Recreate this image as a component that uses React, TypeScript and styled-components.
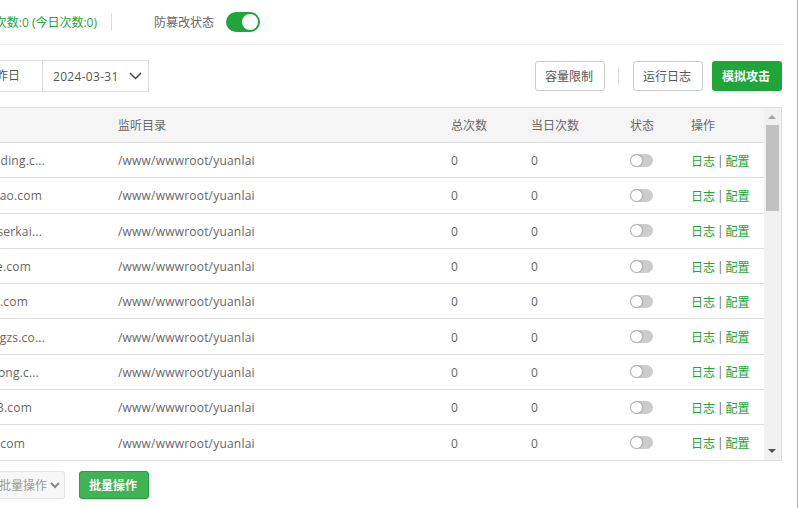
import * as React from "react";
import styled, { createGlobalStyle } from "styled-components";

const GlobalStyle = createGlobalStyle`
  html, body {
    margin: 0;
    padding: 0;
    background: #fff;
  }
  body {
    font-family: "Open Sans", "Noto Sans CJK SC", sans-serif;
    font-size: 12px;
    color: #666;
  }
`;

const Viewport = styled.div`
  width: 798px;
  height: 508px;
  overflow: hidden;
  background: #fff;
  box-sizing: border-box;
  border-right: 1px solid #b4b4b4;
`;

// the panel is cut off by the left edge of the window
const Panel = styled.div`
  width: 882px;
  margin-left: -100px;
  display: flex;
  flex-direction: column;
`;

const TopBar = styled.div`
  height: 44px;
  display: flex;
  align-items: center;
  border-bottom: 1px solid #eee;
  box-sizing: content-box;
`;

const Count = styled.span`
  color: #20a53a;
  width: 197px;
  text-align: right;
  white-space: nowrap;
`;

const VLine = styled.span<{ $h: number }>`
  width: 1px;
  height: ${(p) => p.$h}px;
  background: #ddd;
`;

const CountDivider = styled(VLine)`
  margin-left: 14px;
`;

const TopLabel = styled.span`
  margin-left: 42px;
  font-size: 12px;
  color: #666;
`;

const BigSwitch = styled.span`
  margin-left: 12px;
  width: 34px;
  height: 20px;
  border-radius: 10px;
  background: #20a53a;
  position: relative;
  &::after {
    content: "";
    position: absolute;
    right: 2px;
    top: 2px;
    width: 16px;
    height: 16px;
    border-radius: 50%;
    background: #fff;
  }
`;

const Toolbar = styled.div`
  display: flex;
  align-items: center;
  height: 32px;
  margin-top: 15px;
`;

const DateGroup = styled.div`
  display: flex;
  height: 32px;
  box-sizing: border-box;
  border: 1px solid #ddd;
  margin-left: 90px;
  width: 159px;
`;

const DateTab = styled.span`
  width: 52px;
  text-align: right;
  padding-right: 22px;
  box-sizing: border-box;
  line-height: 30px;
  white-space: nowrap;
  border-right: 1px solid #ddd;
  color: #555;
`;

const DateValue = styled.span`
  flex: 1;
  display: flex;
  align-items: center;
  padding-left: 10px;
  gap: 10px;
  color: #555;
  letter-spacing: 0.3px;
`;

const Spacer = styled.div`
  flex: 1;
`;

const OutlineButton = styled.button`
  width: 70px;
  height: 30px;
  padding: 0 2px 0 0;
  background: #fff;
  border: 1px solid #ccc;
  border-radius: 3px;
  font: inherit;
  color: #555;
`;

const PrimaryButton = styled.button`
  width: 70px;
  height: 30px;
  margin-left: 9px;
  padding: 0 2px 0 0;
  background: #20a53a;
  border: 0;
  border-radius: 3px;
  font: inherit;
  font-weight: 700;
  color: #fff;
`;

const Divider = styled(VLine)`
  margin: 0 14px 0 13px;
`;

const TableBox = styled.div`
  margin-top: 15px;
  height: 354px;
  box-sizing: border-box;
  border: 1px solid #ddd;
  display: flex;
`;

const TableBody = styled.div`
  flex: 1;
  min-width: 0;
  overflow: hidden;
`;

const cols = "217px 333px 80px 99px 61px 1fr";

const HeadRow = styled.div`
  display: grid;
  grid-template-columns: ${cols};
  height: 34px;
  align-items: center;
  background: #f5f5f5;
  border-bottom: 1px solid #ddd;
  box-sizing: content-box;
`;

const Row = styled.div`
  display: grid;
  grid-template-columns: ${cols};
  height: 33.3px;
  padding-top: 1px;
  align-items: center;
  border-bottom: 1px solid #ddd;
  box-sizing: content-box;
`;

const Site = styled.span<{ $end: number }>`
  text-align: right;
  padding-right: ${(p) => 117 - p.$end}px;
  white-space: nowrap;
  letter-spacing: 0.2px;
`;

const PathCell = styled.span`
  letter-spacing: 0.2px;
`;

const SwitchCell = styled.span`
  display: flex;
  margin-top: -1px;
`;

const SmallSwitch = styled.span`
  width: 23px;
  height: 13px;
  border-radius: 7px;
  background: #ccc;
  position: relative;
  &::after {
    content: "";
    position: absolute;
    left: 1px;
    top: 1px;
    width: 11px;
    height: 11px;
    border-radius: 50%;
    background: #fff;
    box-shadow: 0 0 2px rgba(0, 0, 0, 0.5);
  }
`;

const Ops = styled.span`
  display: flex;
  gap: 2px;
  color: #666;
  white-space: nowrap;
`;

const OpLink = styled.a`
  color: #20a53a;
`;

const ScrollTrack = styled.div`
  width: 17px;
  background: #f1f1f1;
  position: relative;
  flex: none;
`;

const ScrollThumb = styled.div`
  position: absolute;
  left: 2px;
  right: 2px;
  top: 17px;
  height: 86px;
  background: #c1c1c1;
`;

const Arrow = styled.span<{ $down?: boolean }>`
  position: absolute;
  left: 4px;
  width: 0;
  height: 0;
  border-left: 4px solid transparent;
  border-right: 4px solid transparent;
  ${(p) =>
    p.$down
      ? "bottom: 7px; border-top: 4px solid #505050;"
      : "top: 7px; border-bottom: 4px solid #a3a3a3;"}
`;

const Footer = styled.div`
  display: flex;
  align-items: center;
  margin-top: 10px;
`;

const BatchSelect = styled.div`
  margin-left: 90px;
  width: 75px;
  height: 28px;
  box-sizing: border-box;
  border: 1px solid #e5e5e5;
  border-radius: 3px;
  background: #f7f7f7;
  color: #999;
  display: flex;
  align-items: center;
  justify-content: flex-end;
  padding-right: 4px;
  gap: 3px;
`;

const BatchButton = styled.button`
  margin-left: 14px;
  width: 70px;
  height: 28px;
  padding: 0 2px 0 0;
  background: #3fb356;
  border: 1px solid #20a53a;
  border-radius: 3px;
  font: inherit;
  font-weight: 700;
  color: #fff;
`;

const sites = [
  { name: "ding.c...", end: 44 },
  { name: "ao.com", end: 41 },
  { name: "serkai...", end: 41 },
  { name: "e.com", end: 30 },
  { name: ".com", end: 27 },
  { name: "gzs.co...", end: 44 },
  { name: "ong.c...", end: 38 },
  { name: "3.com", end: 31 },
  { name: "com", end: 24 },
];

export default function App() {
  return (
    <Viewport>
      <GlobalStyle />
      <Panel>
        <TopBar>
          <Count>总次数:0 (今日次数:0)</Count>
          <CountDivider $h={18} />
          <TopLabel>防篡改状态</TopLabel>
          <BigSwitch />
        </TopBar>
        <Toolbar>
          <DateGroup>
            <DateTab>昨日</DateTab>
            <DateValue>
              2024-03-31
              <svg width="13" height="8" viewBox="0 0 13 8" fill="none" stroke="#444" strokeWidth="1.5">
                <path d="M1 1l5.5 5.5L12 1" />
              </svg>
            </DateValue>
          </DateGroup>
          <Spacer />
          <OutlineButton>容量限制</OutlineButton>
          <Divider $h={18} />
          <OutlineButton>运行日志</OutlineButton>
          <PrimaryButton>模拟攻击</PrimaryButton>
        </Toolbar>
        <TableBox>
          <TableBody>
            <HeadRow>
              <span />
              <span>监听目录</span>
              <span>总次数</span>
              <span>当日次数</span>
              <span>状态</span>
              <span>操作</span>
            </HeadRow>
            {sites.map((s) => (
              <Row key={s.name}>
                <Site $end={s.end}>{s.name}</Site>
                <PathCell>/www/wwwroot/yuanlai</PathCell>
                <span>0</span>
                <span>0</span>
                <SwitchCell>
                  <SmallSwitch />
                </SwitchCell>
                <Ops>
                  <OpLink>日志</OpLink>|<OpLink>配置</OpLink>
                </Ops>
              </Row>
            ))}
          </TableBody>
          <ScrollTrack>
            <Arrow />
            <ScrollThumb />
            <Arrow $down />
          </ScrollTrack>
        </TableBox>
        <Footer>
          <BatchSelect>
            批量操作
            <svg width="10" height="7" viewBox="0 0 10 7" fill="none" stroke="#888" strokeWidth="2">
              <path d="M1 1l4 4 4-4" />
            </svg>
          </BatchSelect>
          <BatchButton>批量操作</BatchButton>
        </Footer>
      </Panel>
    </Viewport>
  );
}
